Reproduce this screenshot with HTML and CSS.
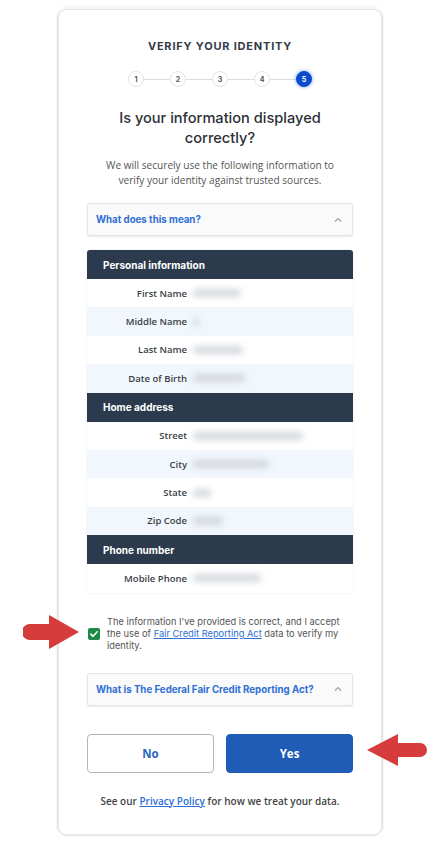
FILE: index.html
```html
<!DOCTYPE html>
<html lang="en">
<head>
    <meta charset="UTF-8">
    <meta name="viewport" content="width=device-width, initial-scale=1.0">
    <title>Verify your identity</title>
    <link rel="stylesheet" href="styles.css">
</head>
<body>
    <div class="card">
        <h2 class="eyebrow">VERIFY YOUR IDENTITY</h2>

        <div class="stepper">
            <span class="step">1</span><span class="step-line"></span>
            <span class="step">2</span><span class="step-line"></span>
            <span class="step">3</span><span class="step-line"></span>
            <span class="step">4</span><span class="step-line"></span>
            <span class="step active">5</span>
        </div>

        <h1>Is your information displayed correctly?</h1>
        <p class="lead">We will securely use the following information to verify your identity against trusted sources.</p>

        <div class="accordion">
            <span>What does this mean?</span>
            <svg class="chev" width="8" height="6" viewBox="0 0 8 6"><path d="M1 4.5 L4 1.5 L7 4.5" fill="none" stroke="#9aa3ad" stroke-width="1.2"/></svg>
        </div>

        <div class="info-table">
            <div class="section-head">Personal information</div>
            <div class="row"><span class="label">First Name</span><span class="blur w48"></span></div>
            <div class="row alt"><span class="label">Middle Name</span><span class="blur w6"></span></div>
            <div class="row"><span class="label">Last Name</span><span class="blur w50"></span></div>
            <div class="row alt"><span class="label">Date of Birth</span><span class="blur w52"></span></div>

            <div class="section-head">Home address</div>
            <div class="row"><span class="label">Street</span><span class="blur w110"></span></div>
            <div class="row alt"><span class="label">City</span><span class="blur w76"></span></div>
            <div class="row"><span class="label">State</span><span class="blur w18"></span></div>
            <div class="row alt"><span class="label">Zip Code</span><span class="blur w30"></span></div>

            <div class="section-head">Phone number</div>
            <div class="row"><span class="label">Mobile Phone</span><span class="blur w68"></span></div>
        </div>

        <div class="consent">
            <span class="checkbox">
                <svg width="12" height="12" viewBox="0 0 12 12"><path d="M2.8 6.2 L5 8.3 L9.3 3.8" fill="none" stroke="#fff" stroke-width="1.6" stroke-linecap="round" stroke-linejoin="round"/></svg>
            </span>
            <p>The information I've provided is correct, and I accept the use of <a href="#">Fair Credit Reporting Act</a> data to verify my identity.</p>
        </div>

        <div class="accordion">
            <span>What is The Federal Fair Credit Reporting Act?</span>
            <svg class="chev" width="8" height="6" viewBox="0 0 8 6"><path d="M1 4.5 L4 1.5 L7 4.5" fill="none" stroke="#9aa3ad" stroke-width="1.2"/></svg>
        </div>

        <div class="actions">
            <button class="btn btn-no">No</button>
            <button class="btn btn-yes">Yes</button>
        </div>

        <p class="privacy">See our <a href="#">Privacy Policy</a> for how we treat your data.</p>
    </div>

    <!-- annotation arrows -->
    <svg class="arrow arrow-left" width="58" height="36" viewBox="0 0 58 36">
        <path d="M7 10 H26 V1 L56 18 L26 35 V26 H7 A8 8 0 0 1 7 10 Z" fill="#d63c3c"/>
    </svg>
    <svg class="arrow arrow-right" width="62" height="34" viewBox="0 0 62 34">
        <path d="M1 17 L32 1 V10 H54 A7 7 0 0 1 54 24 H32 V33 Z" fill="#d63c3c"/>
    </svg>
</body>
</html>
```

FILE: styles.css
```css
body {
    margin: 0;
    background-color: #fff;
    font-family: "Open Sans", Arial, sans-serif;
    color: #333;
    position: relative;
    min-height: 849px;
}

.card {
    width: 322px;
    box-sizing: border-box;
    margin: 10px 0 0 59px;
    padding: 29px 28px 26px;
    background-color: #fff;
    border-radius: 7px;
    box-shadow: 0 0 0 1px #e6e6e6, -3px 0 2px -1px #dedede, 3px 0 2px -1px #dedede, 0 3px 2px -1px #e2e2e2, 0 -4px 6px -2px #ececec;
}

.eyebrow {
    margin: 0;
    text-align: center;
    font-family: Inter, sans-serif;
    font-size: 11px;
    font-weight: 700;
    letter-spacing: 0.8px;
    color: #333b48;
    line-height: 14px;
}

.stepper {
    display: flex;
    align-items: center;
    justify-content: center;
    margin: 18px 0 0;
}

.step {
    width: 16px;
    height: 16px;
    box-sizing: border-box;
    border: 1px solid #e3e3e3;
    border-radius: 50%;
    font-family: Inter, sans-serif;
    font-size: 7px;
    font-weight: 700;
    color: #555;
    display: flex;
    justify-content: center;
    align-items: center;
}

.step.active {
    background-color: #0b4ccc;
    border-color: #0b4ccc;
    color: #fff;
    box-shadow: 0 0 3px 1px rgba(11, 76, 204, 0.35);
}

.step-line {
    width: 26px;
    height: 1px;
    background-color: #dcdcdc;
}

h1 {
    margin: 21px 0 0;
    text-align: center;
    font-family: Inter, sans-serif;
    font-size: 14.6px;
    font-weight: 500;
    line-height: 20px;
    color: #2b2f36;
}

.lead {
    margin: 10px 6px 0;
    text-align: center;
    font-size: 10.1px;
    line-height: 15px;
    color: #555;
}

.accordion {
    height: 33px;
    box-sizing: border-box;
    margin-top: 15px;
    padding: 0 10px 0 8px;
    border: 1px solid #e6e6e6;
    border-radius: 3px;
    background-color: #fafafa;
    box-shadow: 0 1px 2px rgba(0, 0, 0, 0.08);
    display: flex;
    align-items: center;
    justify-content: space-between;
    font-family: Inter, sans-serif;
    font-size: 9.7px;
    font-weight: 700;
    color: #2f6fd6;
}

.info-table {
    margin-top: 14px;
    border-radius: 3px;
    overflow: hidden;
    box-shadow: 0 0 2px rgba(0, 0, 0, 0.12);
}

.section-head {
    height: 29px;
    padding-left: 16px;
    display: flex;
    align-items: center;
    background-color: #2c3a4e;
    color: #fff;
    font-family: Inter, sans-serif;
    font-size: 10px;
    font-weight: 700;
}

.row {
    height: 28.4px;
    display: flex;
    align-items: center;
    background-color: #fff;
}

.row.alt {
    background-color: #f1f7fc;
}

.label {
    width: 100px;
    text-align: right;
    font-size: 9.5px;
    font-weight: 600;
    color: #3a3f47;
}

.blur {
    margin-left: 6px;
    height: 8px;
    border-radius: 4px;
    background-color: #d4d8de;
    filter: blur(3px);
}

.w6 { width: 6px; }
.w18 { width: 18px; }
.w30 { width: 30px; }
.w48 { width: 48px; }
.w50 { width: 50px; }
.w52 { width: 52px; }
.w68 { width: 68px; }
.w76 { width: 76px; }
.w110 { width: 110px; }

.consent {
    display: flex;
    align-items: center;
    gap: 7px;
    margin-top: 23px;
    padding-left: 1px;
}

.checkbox {
    flex: none;
    width: 12px;
    height: 12px;
    border-radius: 2px;
    background-color: #1b8a45;
    display: flex;
}

.consent p {
    margin: 0;
    max-width: 240px;
    font-family: Inter, sans-serif;
    font-size: 9.3px;
    line-height: 12px;
    color: #555;
}

.consent a,
.privacy a {
    color: #2f6fd6;
}

.consent + .accordion {
    margin-top: 21px;
}

.actions {
    display: flex;
    gap: 12px;
    margin-top: 28px;
}

.btn {
    flex: 1;
    height: 39px;
    border-radius: 4px;
    font-family: "Open Sans", sans-serif;
    font-size: 11.5px;
    font-weight: 700;
    cursor: pointer;
}

.btn-no {
    background-color: #fff;
    border: 1px solid #b5b5b5;
    color: #2c63c4;
}

.btn-yes {
    background-color: #1f5cb6;
    border: 1px solid #1f5cb6;
    color: #fff;
}

.privacy {
    margin: 21px 0 0;
    text-align: center;
    font-size: 10px;
    font-weight: 600;
    color: #444;
}

.arrow {
    position: absolute;
}

.arrow-left {
    left: 23px;
    top: 614px;
}

.arrow-right {
    left: 366px;
    top: 733px;
}
```
